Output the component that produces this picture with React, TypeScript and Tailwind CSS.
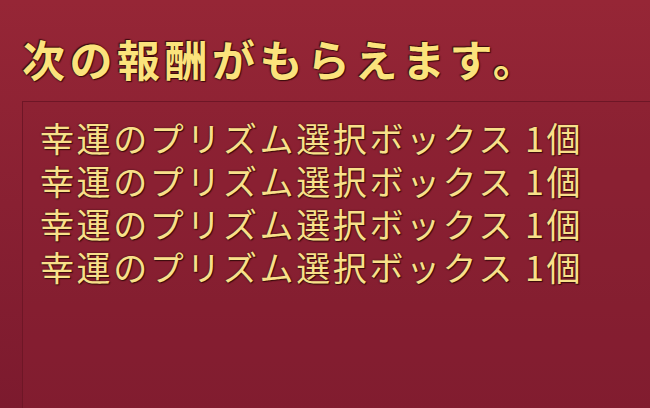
const rewards = Array.from({ length: 4 }, () => ({
  name: "幸運のプリズム選択ボックス",
  count: "1個",
}));

export default function App() {
  return (
    <div
      className="w-[650px] h-[408px] overflow-hidden bg-gradient-to-b from-[#962636] to-[#7c1a2e] flex flex-col"
      style={{ fontFamily: '"Noto Sans CJK JP", "Noto Sans", sans-serif' }}
    >
      <h1 className="pl-[22px] pt-[30px] h-[101px] text-[43px] leading-[56px] font-bold tracking-[4.5px] text-[#fbe37c] [text-shadow:0_0_2px_#3b0c0c,1px_1px_1px_#3b0c0c,-1px_-1px_1px_#3b0c0c]">
        次の報酬がもらえます。
      </h1>
      <div className="ml-[22px] flex-1 border-t border-l border-[#6e1626] bg-[#8a2032]/40 pl-[17px] pt-[15px]">
        <ul className="flex flex-col">
          {rewards.map((r, i) => (
            <li
              key={i}
              className="h-[43px] text-[34px] leading-[42px] tracking-[2.6px] text-[#f8e08a] whitespace-nowrap [text-shadow:0_0_2px_#3b0c0c,1px_1px_1px_#3b0c0c]"
            >
              {r.name} {r.count}
            </li>
          ))}
        </ul>
      </div>
    </div>
  );
}
